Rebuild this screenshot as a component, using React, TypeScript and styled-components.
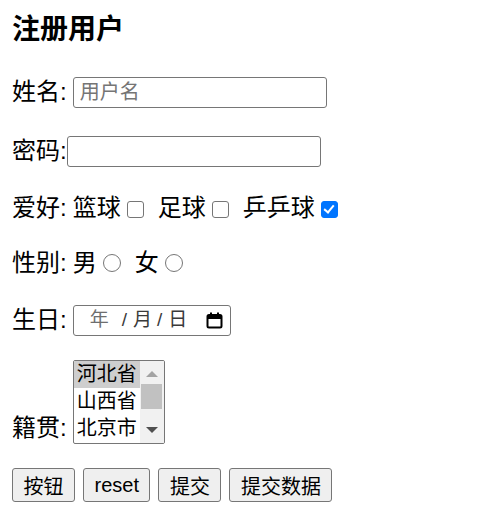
import styled, { createGlobalStyle } from 'styled-components'

const GlobalStyle = createGlobalStyle`
  body {
    margin: 0;
    background: #fff;
    color: #000;
    font-family: 'Liberation Sans', 'Noto Sans CJK SC', sans-serif;
  }
`

const Page = styled.form`
  display: flex;
  flex-direction: column;
  padding: 12px;
`

const Title = styled.h3`
  margin: 0;
  height: 36px;
  line-height: 36px;
  font-size: 28px;
  font-weight: 700;
`

const Row = styled.div<{ $top: number; $h?: number; $bottom?: boolean }>`
  display: flex;
  align-items: ${(p) => (p.$bottom ? 'flex-end' : 'center')};
  margin-top: ${(p) => p.$top}px;
  height: ${(p) => p.$h ?? 36}px;
  font-size: 24px;
  line-height: 32px;
`

const Label = styled.span<{ $gap?: number }>`
  margin-right: ${(p) => p.$gap ?? 0}px;
`

const Text = styled.span<{ $left?: number }>`
  margin-left: ${(p) => p.$left ?? 0}px;
`

const TextInput = styled.input`
  box-sizing: border-box;
  width: 254px;
  height: 31px;
  padding: 0 6px;
  border: 1px solid #767676;
  border-radius: 3px;
  font-size: 20px;
  font-family: 'Liberation Sans', 'Noto Sans CJK SC', sans-serif;
  &::placeholder {
    color: #757575;
  }
`

const Check = styled.input`
  appearance: none;
  position: relative;
  box-sizing: border-box;
  width: 17px;
  height: 17px;
  margin: 2px 0 0 6px;
  border: 1.5px solid #767676;
  border-radius: 3px;
  background: #fff;
  &:checked {
    background: #0075ff;
    border-color: #0075ff;
  }
  &:checked::after {
    content: '';
    position: absolute;
    left: 4.5px;
    top: 1px;
    width: 4px;
    height: 8px;
    border: solid #fff;
    border-width: 0 2.5px 2.5px 0;
    transform: rotate(40deg);
  }
`

const Radio = styled.input`
  appearance: none;
  box-sizing: border-box;
  width: 18px;
  height: 18px;
  margin: 0 0 0 6px;
  border: 1.5px solid #767676;
  border-radius: 50%;
  background: #fff;
`

const DateBox = styled.div`
  box-sizing: border-box;
  display: flex;
  align-items: center;
  width: 158px;
  height: 31px;
  padding: 0 7px 0 16px;
  border: 1px solid #767676;
  border-radius: 3px;
  font-size: 19px;
  color: #3a3a3a;
`

const DatePart = styled.span<{ $left?: number; $muted?: boolean }>`
  margin-left: ${(p) => p.$left ?? 0}px;
  color: ${(p) => (p.$muted ? '#6e6e6e' : '#3a3a3a')};
`

const CalIcon = styled.svg`
  margin-left: auto;
`

const ListBox = styled.div`
  box-sizing: border-box;
  display: flex;
  width: 92px;
  height: 84px;
  border: 1px solid #767676;
  border-radius: 2px;
  overflow: hidden;
`

const Options = styled.div`
  display: flex;
  flex-direction: column;
  width: 66px;
  font-size: 20px;
`

const Option = styled.div<{ $selected?: boolean }>`
  height: 27px;
  line-height: 27px;
  padding-left: 3px;
  background: ${(p) => (p.$selected ? '#cecece' : 'transparent')};
`

const Scrollbar = styled.div`
  display: flex;
  flex-direction: column;
  align-items: center;
  flex: 1;
  background: #f1f1f1;
`

const Arrow = styled.div<{ $down?: boolean }>`
  width: 0;
  height: 0;
  margin: ${(p) => (p.$down ? 'auto 0 10px' : '10px 0 0')};
  border-left: 6px solid transparent;
  border-right: 6px solid transparent;
  ${(p) =>
    p.$down
      ? 'border-top: 6px solid #505050;'
      : 'border-bottom: 6px solid #a3a3a3;'}
`

const Thumb = styled.div`
  width: 21px;
  height: 25px;
  margin-top: 7px;
  background: #c1c1c1;
`

const Buttons = styled.div`
  display: flex;
  gap: 8px;
  margin-top: 24px;
`

const Button = styled.button`
  height: 34px;
  padding: 0 10.5px;
  border: 1.5px solid #767676;
  border-radius: 3px;
  background: #efefef;
  font-size: 20px;
  font-family: 'Liberation Sans', 'Noto Sans CJK SC', sans-serif;
  color: #000;
`

const App = () => {
  return (
    <>
      <GlobalStyle />
      <Page onSubmit={(e) => e.preventDefault()}>
        <Title>注册用户</Title>
        <Row $top={26}>
          <Label $gap={6}>姓名:</Label>
          <TextInput type="text" placeholder="用户名" />
        </Row>
        <Row $top={23}>
          <Label>密码:</Label>
          <TextInput type="password" />
        </Row>
        <Row $top={21}>
          <Label $gap={6}>爱好:</Label>
          <Text>篮球</Text>
          <Check type="checkbox" />
          <Text $left={14}>足球</Text>
          <Check type="checkbox" />
          <Text $left={14}>乒乒球</Text>
          <Check type="checkbox" defaultChecked />
        </Row>
        <Row $top={19}>
          <Label $gap={6}>性别:</Label>
          <Text>男</Text>
          <Radio type="radio" name="sex" />
          <Text $left={14}>女</Text>
          <Radio type="radio" name="sex" />
        </Row>
        <Row $top={21}>
          <Label $gap={6}>生日:</Label>
          <DateBox>
            <DatePart $muted>年</DatePart>
            <DatePart $left={13}>/</DatePart>
            <DatePart $left={6}>月</DatePart>
            <DatePart $left={5}>/</DatePart>
            <DatePart $left={6}>日</DatePart>
            <CalIcon width="17" height="17" viewBox="0 0 17 17">
              <rect x="1.5" y="3" width="14" height="12.5" rx="1.5" fill="none" stroke="#000" strokeWidth="2" />
              <rect x="1.5" y="3" width="14" height="4" fill="#000" />
              <rect x="4" y="0.5" width="2" height="3" fill="#000" />
              <rect x="11" y="0.5" width="2" height="3" fill="#000" />
            </CalIcon>
          </DateBox>
        </Row>
        <Row $top={22} $h={84} $bottom>
          <Label $gap={6}>籍贯:</Label>
          <ListBox>
            <Options>
              <Option $selected>河北省</Option>
              <Option>山西省</Option>
              <Option>北京市</Option>
            </Options>
            <Scrollbar>
              <Arrow />
              <Thumb />
              <Arrow $down />
            </Scrollbar>
          </ListBox>
        </Row>
        <Buttons>
          <Button type="button">按钮</Button>
          <Button type="reset">reset</Button>
          <Button type="submit">提交</Button>
          <Button type="submit">提交数据</Button>
        </Buttons>
      </Page>
    </>
  )
}

export default App
